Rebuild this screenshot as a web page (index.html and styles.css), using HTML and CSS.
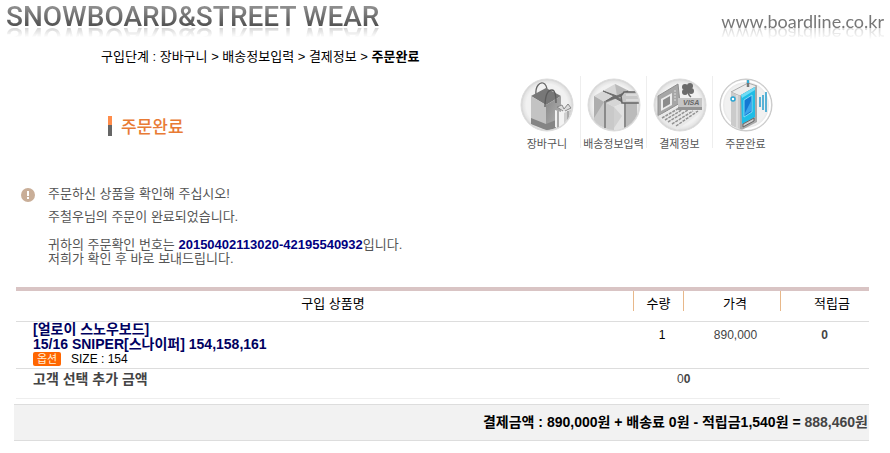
FILE: index.html
```
<!DOCTYPE html>
<html lang="ko">

	<head>
		<meta charset="UTF-8">
		<title>주문완료</title>
		<link rel="stylesheet" href="styles.css">
	</head>

	<body>
		<div class="header">
			<h1 class="logo">SNOWBOARD&amp;STREET WEAR</h1>
			<a class="site" href="#">www.boardline.co.kr</a>
		</div>

		<div class="path">구입단계 : 장바구니 &gt; 배송정보입력 &gt; 결제정보 &gt; <b>주문완료</b></div>

		<!-- title and step icons -->
		<div class="top">
			<h2 class="title">주문완료</h2>
			<ul class="steps">
				<li>
					<svg width="54" height="54" viewBox="0 0 54 54">
						<defs>
							<radialGradient id="disc">
								<stop offset="0.8" stop-color="#f1f1f1" />
								<stop offset="0.92" stop-color="#e4e4e4" />
								<stop offset="1" stop-color="#cfcfcf" />
							</radialGradient>
							<linearGradient id="side" x2="1" y2="1">
								<stop offset="0" stop-color="#888" />
								<stop offset="1" stop-color="#b5b5b5" />
							</linearGradient>
							<clipPath id="round"><circle cx="27" cy="27" r="25" /></clipPath>
						</defs>
						<circle cx="27" cy="27" r="26" fill="url(#disc)" stroke="#ddd" />
						<g clip-path="url(#round)">
							<path d="M16 17C15 8 20 4 23 5c3 1 4 3 4 8" fill="none" stroke="#666" stroke-width="1.3" />
							<path d="M11 18L26 10L41 18L26 27Z" fill="#777" />
							<path d="M11 18L26 27V52L11 46Z" fill="#c3c3c3" />
							<path d="M26 27L41 18V48L26 52Z" fill="url(#side)" />
							<path d="M11 40L26 46V52L11 46ZM26 46L36 42V50L26 53Z" fill="#858585" />
							<path d="M25 29C25 17 28 12 32 12c3 0 4 5 4 13" fill="none" stroke="#5c5c5c" stroke-width="1.3" />
							<path d="M35 32L44 35L52 31V46L43 53L35 49Z" fill="#f3f3f3" />
							<path d="M44 35L52 31V46L44 53Z" fill="#cfcfcf" />
							<path d="M38 33V50M48 33V49" stroke="#aaa" stroke-width="2" />
							<path d="M43 33L37 29l5-2 2 4 4-5 3 4-6 3" fill="#ddd" stroke="#888" />
						</g>
					</svg>
					<span>장바구니</span>
				</li>
				<li>
					<svg width="54" height="54" viewBox="0 0 54 54">
						<circle cx="27" cy="27" r="26" fill="url(#disc)" stroke="#ddd" />
						<g clip-path="url(#round)">
							<path d="M7 18L28 6L52 18L27 29Z" fill="#d6d6d6" />
							<path d="M28 6L52 18L30 18Z" fill="#b9b9b9" />
							<path d="M7 18L27 29V54L7 45Z" fill="#c9c9c9" />
							<path d="M7 18L17 24L7 40Z" fill="#aeaeae" />
							<path d="M27 29L50 19V45L27 54Z" fill="#e2e2e2" />
							<path d="M38 24L50 19V45L38 50Z" fill="#bbb" />
							<path d="M27 29L35 38L27 50Z" fill="#d0d0d0" />
							<path d="M30 19L18 24V50M30 19L38 24V51" fill="none" stroke="#8a8a8a" stroke-width="2" />
							<path d="M16 13L30 18L41 13L36 18L30 19L37 25L28 20L19 23L27 18Z" fill="#6d6d6d" stroke="#6d6d6d" />
							<path d="M34 18L37 14H54V25H35Z" fill="#c8c8c8" stroke="#666" stroke-width="1.5" />
							<path d="M39 17H54M39 22H54" stroke="#eee" />
						</g>
					</svg>
					<span>배송정보입력</span>
				</li>
				<li>
					<svg width="54" height="54" viewBox="0 0 54 54">
						<circle cx="27" cy="27" r="26" fill="url(#disc)" stroke="#ddd" />
						<g clip-path="url(#round)">
							<path d="M5 18L25 6L27 25L5 38Z" fill="#a6a6a6" stroke="#8e8e8e" />
							<path d="M8 21L19 15V27L8 33Z" fill="#ececec" />
							<path d="M10 22L17 18V26L10 30Z" fill="#8c8c8c" />
							<path d="M22 12v12" stroke="#ddd" stroke-dasharray="2 1" />
							<path d="M5 38L27 27L50 33L24 52Z" fill="#e9e9e9" />
							<path d="M9 40L28 29M12 42L32 30M15 44L35 32M19 46L40 33M23 48L45 33" stroke="#939393" stroke-width="1.5" stroke-dasharray="3 1" />
							<path d="M25 20H49V32H25Z" fill="#c5c5c5" />
							<path d="M25 29H49V32H25Z" fill="#949494" />
							<text x="30" y="27" class="visa">VISA</text>
							<g fill="#6b6b6b">
								<circle cx="32" cy="9" r="3" />
								<circle cx="37" cy="8" r="3" />
								<circle cx="32" cy="14" r="3" />
								<circle cx="38" cy="13" r="3" />
								<circle cx="35" cy="11" r="3" />
							</g>
							<path d="M35 12Q35 17 38 19" fill="none" stroke="#6b6b6b" stroke-width="1.5" />
						</g>
					</svg>
					<span>결제정보</span>
				</li>
				<li>
					<svg width="54" height="54" viewBox="0 0 54 54">
						<circle cx="27" cy="27" r="26" fill="url(#disc)" stroke="#c8c8c8" />
						<circle cx="27" cy="27" r="24" fill="none" stroke="#fff" stroke-width="2" />
						<g clip-path="url(#round)">
							<path d="M12 14L29 5L38 8L21 18Z" fill="#ececec" stroke="#aaa" />
							<path d="M12 14L21 18V53L12 47Z" fill="#cbcbcb" />
							<path d="M21 18L38 8V44L21 53Z" fill="#a9a9a9" />
							<path d="M18 17V50" stroke="#eee" />
							<path d="M22 17L36 9V39L23 46Z" fill="#1fbde6" />
							<path d="M22 17L36 9V12L23 20Z" fill="#6fdcf5" />
							<path d="M25 22L33 17V34L25 39Z" fill="#1479d3" stroke="#7fdcf6" />
							<path d="M26 35L32 23V33L26 37Z" fill="#3ba5ec" />
							<path d="M24 46L35 40V43L24 49Z" fill="#ccc" stroke="#666" />
							<path d="M29 1V9" stroke="#777" stroke-width="2.5" />
							<path d="M29 1V5" stroke="#2fb0dc" stroke-width="2" />
							<circle cx="14" cy="21" r="2" fill="#fff" stroke="#2aa5d3" stroke-width="1.5" />
							<path d="M41 19V29M44 17V32M47 14V34" stroke="#239dcd" stroke-width="1.5" />
						</g>
					</svg>
					<span>주문완료</span>
				</li>
			</ul>
		</div>

		<!-- message -->
		<div class="message">
			<svg width="14" height="14" viewBox="0 0 14 14">
				<circle cx="7" cy="7" r="7" fill="#c9ae98" />
				<path d="M6 3H8V8H6ZM6 9H8V11H6Z" fill="#fff" />
			</svg>
			<div>
				<p>주문하신 상품을 확인해 주십시오!</p>
				<p>주철우님의 주문이 완료되었습니다.</p>
				<p class="number">귀하의 주문확인 번호는 <b>20150402113020-42195540932</b>입니다.<br>저희가 확인 후 바로 보내드립니다.</p>
			</div>
		</div>

		<table class="order">
			<colgroup>
				<col>
				<col class="col-count">
				<col class="col-price">
				<col class="col-point">
			</colgroup>
			<thead>
				<tr>
					<th class="product"><span>구입 상품명</span></th>
					<th><span>수량</span></th>
					<th class="cost"><span>가격</span></th>
					<th class="point"><span>적립금</span></th>
				</tr>
			</thead>
			<tbody>
				<tr class="item">
					<td class="name">
						<a href="#">[얼로이 스노우보드]<br>15/16 SNIPER[스나이퍼] 154,158,161</a>
						<div class="option"><span class="tag">옵션</span>SIZE : 154</div>
					</td>
					<td class="count">1</td>
					<td class="price">890,000</td>
					<td class="price"><b>0</b></td>
				</tr>
				<tr class="extra">
					<td class="name">고객 선택 추가 금액</td>
					<td class="sum" colspan="2">0<b>0</b></td>
					<td></td>
				</tr>
			</tbody>
		</table>

		<div class="total">결제금액 : 890,000원 + 배송료 0원 - 적립금1,540원 = <span>888,460원</span></div>
	</body>

</html>
```
FILE: styles.css
```
* {
	margin: 0;
	padding: 0;
}

body {
	background: #fff;
	color: #000;
	font: 13px/14px "Liberation Sans", "Noto Sans CJK KR", sans-serif;
}

.header {
	display: flex;
	justify-content: space-between;
	height: 42px;
	padding: 0 6px;
}

.logo {
	height: 33px;
	font: 500 28px/33px Roboto, sans-serif;
	color: transparent;
	background: linear-gradient(#999 10%, #505050 80%);
	-webkit-background-clip: text;
	background-clip: text;
	-webkit-box-reflect: below -12px linear-gradient(transparent 50%, rgba(0, 0, 0, 0.25) 80%);
}

.site {
	height: 22px;
	margin-top: 10px;
	font: 18px/22px Lato, sans-serif;
	color: #777;
	text-decoration: none;
	-webkit-box-reflect: below -8px linear-gradient(transparent 30%, rgba(0, 0, 0, 0.3) 80%);
}

.path {
	padding: 8px 0 8px 101px;
}

.top {
	display: flex;
	justify-content: space-between;
	align-items: center;
	height: 80px;
	padding: 0 112px 0 108px;
}

.title {
	display: flex;
	align-items: center;
	gap: 9px;
	margin-top: 28px;
	font: 500 17px/20px "Noto Sans CJK KR", sans-serif;
	color: #e87b35;
}

.title:before {
	content: "";
	width: 4px;
	height: 20px;
	background: linear-gradient(#ff8c4a 45%, #666 45%);
}

.steps {
	display: flex;
	list-style: none;
}

.steps li {
	display: flex;
	flex-direction: column;
	align-items: center;
	gap: 4px;
	width: 66px;
	height: 72px;
	padding-top: 2px;
	box-sizing: border-box;
	border-left: 1px solid #eee;
	font: 11px/14px "Noto Sans CJK KR", sans-serif;
	color: #555;
	white-space: nowrap;
}

.steps li:first-child {
	border-left: 0;
}

.steps svg {
	flex-shrink: 0;
}

.visa {
	font: italic bold 7px "Liberation Sans", sans-serif;
	fill: #666;
}

.message {
	display: flex;
	gap: 13px;
	padding: 35px 21px 21px;
	color: #555;
}

.message svg {
	margin-top: 1px;
}

.message p {
	margin-bottom: 9px;
}

.message .number {
	margin: 14px 0 0;
}

.message b {
	color: #000080;
}

.order {
	width: calc(100% - 37px);
	margin: 0 21px 0 16px;
	table-layout: fixed;
	border-collapse: separate;
	border-spacing: 0;
	border-top: 4px solid #d9c4c4;
}

.col-count {
	width: 50px;
}

.col-price {
	width: 97px;
}

.col-point {
	width: 89px;
}

.order th {
	height: 30px;
	border-bottom: 1px solid #ddd;
	font-weight: normal;
	vertical-align: top;
}

.order th span {
	display: block;
	height: 20px;
	line-height: 26px;
}

.order th + th span {
	border-left: 1px solid #e8b88a;
}

.order .product span {
	padding-left: 17px;
}

.order .cost span {
	padding-left: 6px;
}

.order .point span {
	padding-left: 14px;
}

.order td {
	vertical-align: top;
	text-align: center;
}

.item td {
	height: 46px;
	border-bottom: 1px solid #ddd;
}

.order .name {
	padding-left: 17px;
	text-align: left;
}

.item a {
	display: block;
	color: #000060;
	font-size: 14px;
	line-height: 15px;
	font-weight: bold;
	text-decoration: none;
}

.option {
	display: flex;
	align-items: center;
	gap: 10px;
	font-size: 12px;
}

.tag {
	width: 28px;
	background: #ff6600;
	border-radius: 2px;
	color: #fff0d8;
	font-size: 11px;
	text-align: center;
}

.item .count,
.item .price {
	padding: 6px 0 0 8px;
	height: 40px;
	font-size: 12px;
}

.item .price:last-child {
	padding-left: 0;
}

.price,
.extra {
	color: #444;
}

.extra td {
	height: 26px;
	padding-top: 3px;
	border-bottom: 1px solid #eee;
}

.extra .name {
	font-size: 14px;
	font-weight: bold;
}

.order .sum {
	padding-left: 44px;
	font-size: 12px;
	text-align: left;
}

.extra td:last-child {
	border-bottom: 0;
}

.total {
	margin: 5px 21px 12px 14px;
	padding: 10px 1px 11px;
	background: #f2f2f2;
	border-top: 1px solid #ddd;
	border-bottom: 1px solid #ddd;
	font-size: 14px;
	font-weight: bold;
	text-align: right;
}

.total span {
	color: #444;
}
```
